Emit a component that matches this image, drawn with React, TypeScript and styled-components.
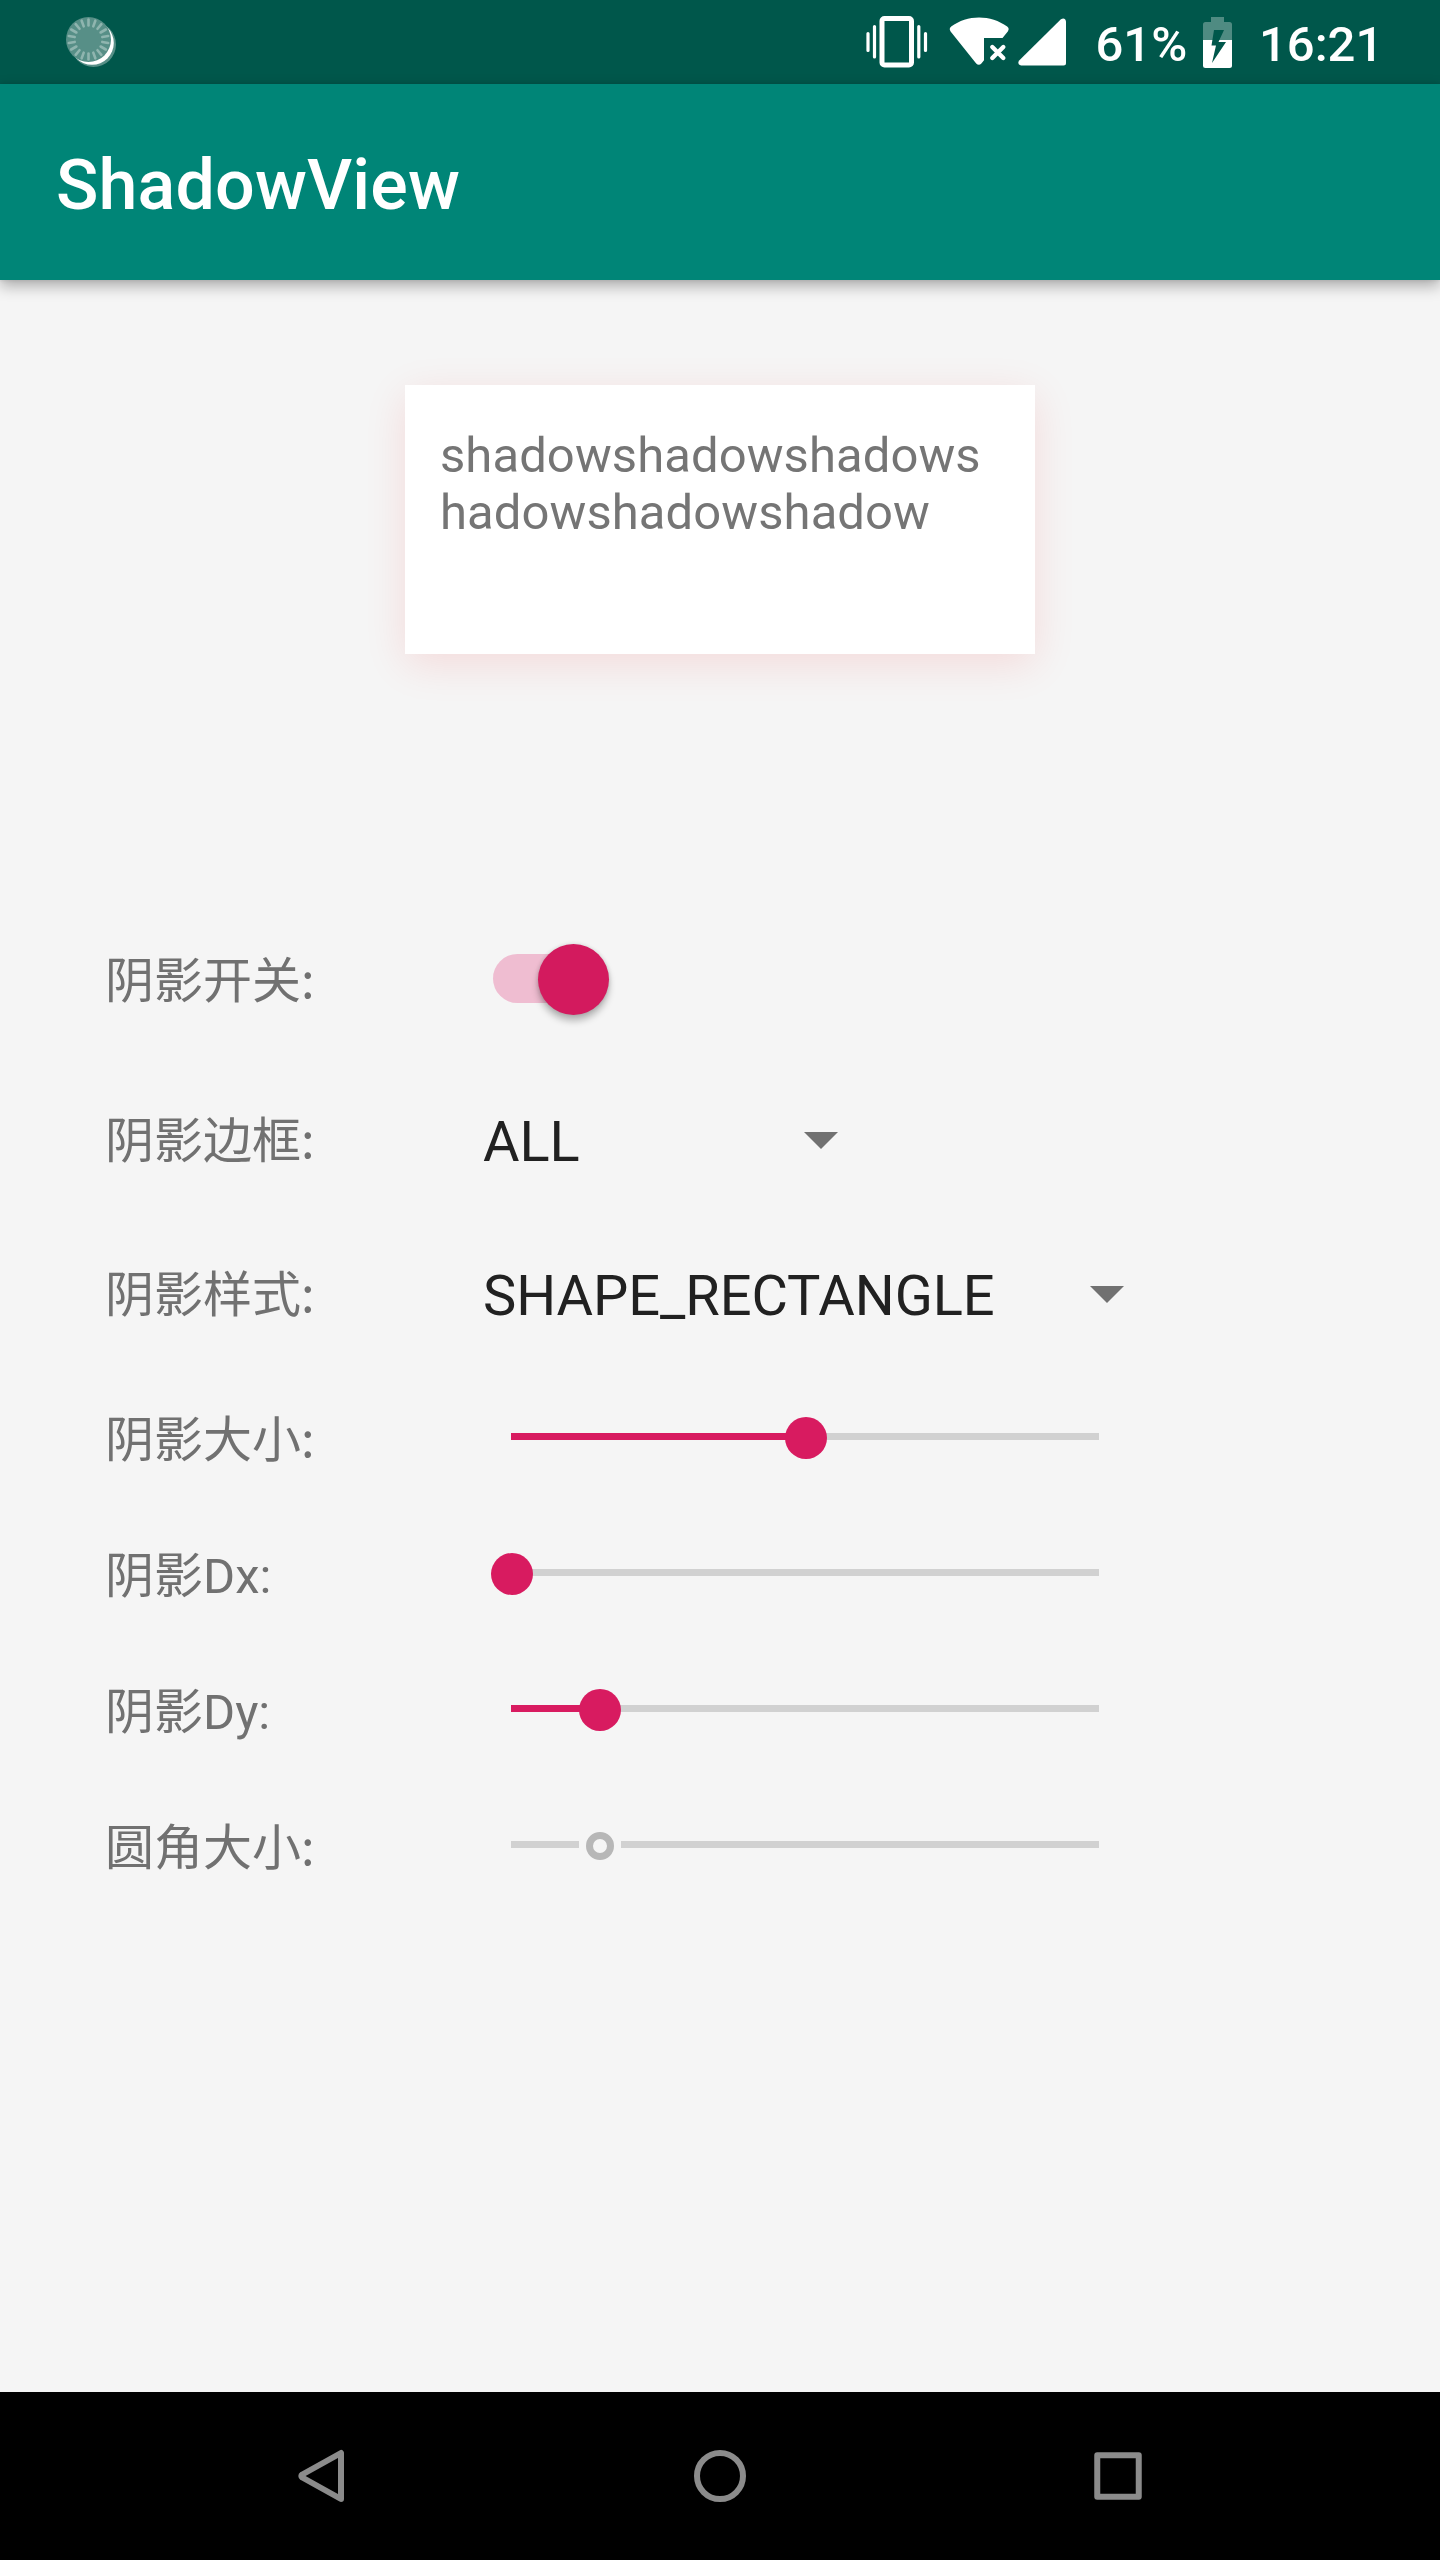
import React from "react";
import styled, { createGlobalStyle } from "styled-components";

const accent = "#d81b60";
const secondary = "#717171";

const Global = createGlobalStyle`
  *, *::before, *::after { box-sizing: border-box; }
  body { margin: 0; background: #f5f5f5; }
`;

const Screen = styled.div`
  width: 1440px;
  height: 2560px;
  display: flex;
  flex-direction: column;
  overflow: hidden;
  background: #f5f5f5;
  color: ${secondary};
  font-family: Roboto, "Noto Sans CJK SC", sans-serif;
  font-size: 49px;
  line-height: 57px;
`;

const StatusBar = styled.header`
  flex: none;
  height: 84px;
  display: flex;
  align-items: center;
  padding: 0 60px 0 66px;
  background: #00574b;
  color: #fff;
  font-weight: 500;
`;

const StatusIcon = styled.svg<{ $gap?: number }>`
  display: block;
  flex: none;
  margin-left: ${(p) => p.$gap ?? 0}px;
`;

const StatusText = styled.span<{ $gap: number; $width: number }>`
  flex: none;
  width: ${(p) => p.$width}px;
  margin-left: ${(p) => p.$gap}px;
  padding-top: 4px;
  white-space: nowrap;
`;

const Spacer = styled.div`
  flex: 1;
`;

const AppBar = styled.div`
  flex: none;
  height: 196px;
  display: flex;
  align-items: center;
  padding: 6px 56px 0;
  background: #008577;
  box-shadow: 0 6px 14px rgba(0, 0, 0, 0.3), 0 0 4px rgba(0, 0, 0, 0.1);
`;

const Title = styled.h1`
  margin: 0;
  color: #fff;
  font-size: 70px;
  line-height: 82px;
  font-weight: 500;
  letter-spacing: 0.15px;
`;

const Content = styled.main`
  flex: 1;
  display: flex;
  flex-direction: column;
  padding-top: 105px;
`;

const ShadowCard = styled.section`
  flex: none;
  align-self: center;
  width: 630px;
  height: 269px;
  padding: 42px 34px 42px 35px;
  background: #fff;
  color: #757575;
  letter-spacing: 0.075px;
  word-break: break-all;
  box-shadow: 0 10px 40px rgba(245, 0, 0, 0.11);
`;

const Form = styled.div`
  display: flex;
  flex-direction: column;
  margin-top: 244px;
  padding-left: 105px;
`;

const Row = styled.div<{ $height: number }>`
  height: ${(p) => p.$height}px;
  display: grid;
  grid-template-columns: 378px auto;
  justify-content: start;
  align-items: center;
`;

/* Labels written entirely in Chinese take their colon from the CJK face,
   whose baseline sits lower in the line than Roboto's. */
const Label = styled.label<{ $cjk?: boolean }>`
  white-space: nowrap;
  ${(p) => p.$cjk && `font-family: "Noto Sans CJK SC", sans-serif; padding-bottom: 9px;`}
`;

const SwitchTrack = styled.div`
  width: 112px;
  height: 49px;
  margin: 0 0 5px 10px;
  display: flex;
  align-items: center;
  justify-content: flex-end;
  border-radius: 25px;
  background: #efbdd1;
`;

const SwitchThumb = styled.div`
  flex: none;
  width: 71px;
  height: 71px;
  margin: 2px -4px 0 0;
  border-radius: 50%;
  background: #d31a5e;
  box-shadow: 0 6px 7px rgba(0, 0, 0, 0.26), 0 0 4px rgba(0, 0, 0, 0.14);
`;

const Select = styled.div<{ $width: number }>`
  width: ${(p) => p.$width}px;
  display: flex;
  align-items: center;
  justify-content: space-between;
  color: #212121;
  font-size: 56px;
  line-height: 66px;
`;

const SelectText = styled.span`
  padding-top: 2px;
  letter-spacing: -0.06px;
`;

const Caret = styled.i`
  margin-bottom: 1px;
  border: solid transparent;
  border-width: 17.5px 17.5px 0;
  border-top-color: ${secondary};
`;

const Slider = styled.div`
  width: 588px;
  height: 42px;
  margin: 0 0 5px 28px;
  display: flex;
  align-items: center;
`;

const Segment = styled.div<{ $active?: boolean }>`
  height: 7px;
  margin-bottom: 2px;
  background: ${(p) => (p.$active ? accent : "#d1d1d1")};
`;

const Thumb = styled.div`
  flex: none;
  width: 42px;
  height: 42px;
  margin: 0 -21.5px 0 -20.5px;
  border-radius: 50%;
  background: ${accent};
  z-index: 1;
`;

const DisabledThumb = styled(Thumb)`
  display: flex;
  align-items: center;
  justify-content: center;
  border-radius: 0;
  background: #f5f5f5;

  &::before {
    content: "";
    width: 28px;
    height: 28px;
    border: 7px solid #b7b7b7;
    border-radius: 50%;
  }
`;

const NavBar = styled.nav`
  flex: none;
  height: 168px;
  display: flex;
  align-items: center;
  justify-content: space-between;
  padding: 0 281px;
  background: #000;
`;

const NavIcon = styled.svg`
  display: block;
  width: 84px;
  height: 84px;
  fill: none;
  stroke: #8b8b8b;
  stroke-width: 6;
  stroke-linejoin: round;
`;

function SeekBar({ value, disabled }: { value: number; disabled?: boolean }) {
  return (
    <Slider>
      <Segment $active={!disabled} style={{ width: `${value}%` }} />
      {disabled ? <DisabledThumb /> : <Thumb />}
      <Segment style={{ width: `${100 - value}%` }} />
    </Slider>
  );
}

function SyncIcon() {
  const ticks = Array.from({ length: 18 }, (_, i) => i * 20);
  return (
    <StatusIcon width="50" height="50" viewBox="0 0 50 50">
      <circle cx="27.5" cy="27.5" r="22.5" fill="#578f87" />
      <circle cx="26" cy="26" r="21.8" fill="#fff" />
      <circle cx="22.5" cy="22.5" r="22.5" fill="#578f87" />
      {ticks.map((a) => (
        <path
          key={a}
          d="M22.5 2.5v6"
          transform={`rotate(${a} 22.5 22.5)`}
          stroke="#8fb5af"
          strokeWidth="2.6"
          strokeLinecap="round"
        />
      ))}
    </StatusIcon>
  );
}

const sliders = [
  { label: "阴影大小:", value: 50, cjk: true },
  { label: "阴影Dx:", value: 0 },
  { label: "阴影Dy:", value: 15 },
  { label: "圆角大小:", value: 15, disabled: true, cjk: true },
];

export default function App() {
  return (
    <Screen>
      <Global />
      <StatusBar>
        <SyncIcon />
        <Spacer />
        <StatusIcon width="62" height="52" viewBox="0 0 62 52">
          <rect x="16" y="2.5" width="29.5" height="46.5" rx="2.5" fill="none" stroke="#fff" strokeWidth="5" />
          <path d="M2 17.5v17M8.5 10.5v30.5M52.8 10.5v30.5M59.5 17.5v17" stroke="#fff" strokeWidth="3.2" strokeLinecap="round" />
        </StatusIcon>
        <StatusIcon $gap={21} width="61" height="50" viewBox="0 0 61 50">
          <path
            d="M2.2 9.6C18-2.6 42-2.6 58.2 9.6q2.6 2 .6 4.8L53.5 21H35v22.2l-2.6 3.2q-2.6 2.6-5.2 0L1.6 14.4q-2-2.8.6-4.8z"
            fill="#fff"
          />
          <path d="M43.3 30l11 11M54.3 30l-11 11" stroke="#fff" strokeWidth="4.4" strokeLinecap="round" />
        </StatusIcon>
        <StatusIcon $gap={8.5} width="48" height="48" viewBox="0 0 48 48">
          <path d="M.9 42.8L42.9 1.2Q47.2-.8 48 3.5V45q0 2.5-2.5 2.500H3Q-1 46.8.9 42.8z" fill="#fff" />
        </StatusIcon>
        <StatusText $gap={29.5} $width={92}>61%</StatusText>
        <StatusIcon $gap={15.5} width="29" height="51" viewBox="0 0 29 51">
          <path d="M8 0h13v5h5.500Q29 5 29 7.500V23H0V7.500Q0 5 2.500 5H8z" fill="#4f8b82" />
          <path d="M0 23h29v25.500q0 2.500-2.500 2.500h-24Q0 51 0 48.500z" fill="#fff" />
          <path d="M11 13h10l-5.500 12H23L9 46l4-17.500H8.500z" fill="#00574b" />
        </StatusIcon>
        <StatusText $gap={27} $width={121}>16:21</StatusText>
      </StatusBar>
      <AppBar>
        <Title>ShadowView</Title>
      </AppBar>
      <Content>
        <ShadowCard>shadowshadowshadowshadowshadowshadow</ShadowCard>
        <Form>
          <Row $height={166}>
            <Label $cjk>阴影开关:</Label>
            <SwitchTrack>
              <SwitchThumb />
            </SwitchTrack>
          </Row>
          <Row $height={154}>
            <Label $cjk>阴影边框:</Label>
            <Select $width={355}>
              <SelectText>ALL</SelectText>
              <Caret />
            </Select>
          </Row>
          <Row $height={154}>
            <Label $cjk>阴影样式:</Label>
            <Select $width={641}>
              <SelectText>SHAPE_RECTANGLE</SelectText>
              <Caret />
            </Select>
          </Row>
          {sliders.map((s) => (
            <Row key={s.label} $height={136}>
              <Label $cjk={s.cjk}>{s.label}</Label>
              <SeekBar value={s.value} disabled={s.disabled} />
            </Row>
          ))}
        </Form>
      </Content>
      <NavBar>
        <NavIcon viewBox="0 0 84 84">
          <path d="M60 19v46L21.300 43.500q-2-1.500 0-3z" />
        </NavIcon>
        <NavIcon viewBox="0 0 84 84">
          <circle cx="42" cy="42" r="23" />
        </NavIcon>
        <NavIcon viewBox="0 0 84 84">
          <rect x="22.250" y="21.250" width="41.500" height="41.500" />
        </NavIcon>
      </NavBar>
    </Screen>
  );
}
